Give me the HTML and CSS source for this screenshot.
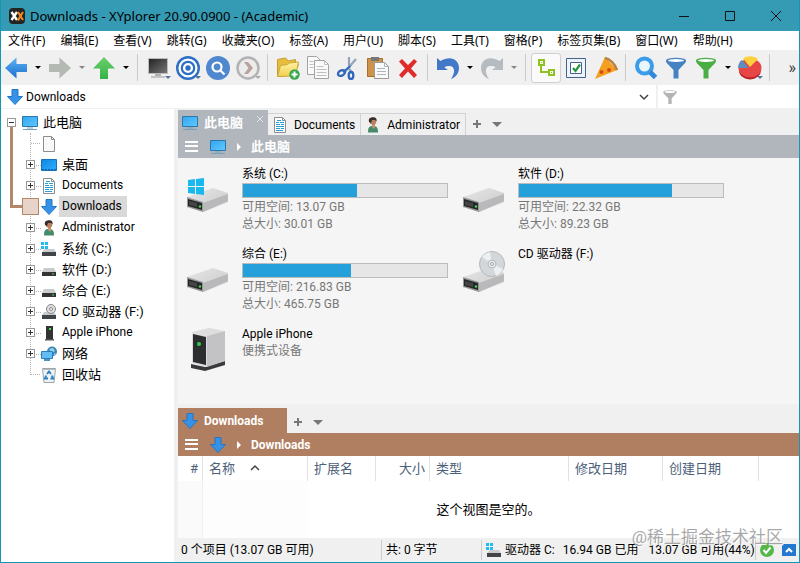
FILE: index.html
```html
<!DOCTYPE html>
<html lang="zh-CN">
<head>
<meta charset="utf-8">
<title>Downloads - XYplorer 20.90.0900 - (Academic)</title>
<link rel="stylesheet" href="styles.css">
</head>
<body>
<svg class="defs" aria-hidden="true">
  <defs>
    <linearGradient id="gBlue" x1="0" y1="0" x2="0" y2="1"><stop offset="0" stop-color="#5db2f2"/><stop offset="1" stop-color="#1b6fd0"/></linearGradient>
    <linearGradient id="gScreen" x1="0" y1="0" x2="1" y2="1"><stop offset="0" stop-color="#35a4f0"/><stop offset="1" stop-color="#5fcaff"/></linearGradient>
    <linearGradient id="gDesk" x1="0" y1="0" x2="1" y2="1"><stop offset="0" stop-color="#0f86e0"/><stop offset="1" stop-color="#2fb0ff"/></linearGradient>
    <linearGradient id="gGreen" x1="0" y1="0" x2="0" y2="1"><stop offset="0" stop-color="#6bd06a"/><stop offset="1" stop-color="#36b14a"/></linearGradient>
    <linearGradient id="gDark" x1="0" y1="0" x2="1" y2="1"><stop offset="0" stop-color="#222"/><stop offset="1" stop-color="#777"/></linearGradient>
    <linearGradient id="gTop" x1="0" y1="0" x2="1" y2="1"><stop offset="0" stop-color="#e6e6e6"/><stop offset="1" stop-color="#c9c9cb"/></linearGradient>
    <linearGradient id="gFolder" x1="0" y1="0" x2="0" y2="1"><stop offset="0" stop-color="#fff3a6"/><stop offset="1" stop-color="#f2cf4e"/></linearGradient>
  </defs>
  <symbol id="down" viewBox="0 0 16 16"><path d="M5 .5h6v7h4.500L8 15.500.500 7.500H5z" fill="#3592e6" stroke="#2377c4"/></symbol>
  <symbol id="pc" viewBox="0 0 18 16"><path d="M1.500 1.500h15v10h-15z" fill="url(#gScreen)" stroke="#2b78ad"/><path d="M6 13h6M2 14.500h14" stroke="#7aa0b8"/></symbol>
  <symbol id="desk" viewBox="0 0 16 16"><path d="M.500 2.500h15v11H.500z" fill="url(#gDesk)" stroke="#1573bf"/><path d="M1 12.500h14" stroke="#0f61ad" stroke-dasharray="2 1"/></symbol>
  <symbol id="page" viewBox="0 0 16 16"><path d="M2.500.500h8l3 3v12h-11z" fill="#f8f8f8" stroke="#8d8d8d"/><path d="M10.500.500v3h3" fill="none" stroke="#8d8d8d"/></symbol>
  <symbol id="docs" viewBox="0 0 16 16"><path d="M2.500.500h8l3 3v12h-11z" fill="#fff" stroke="#8d8d8d"/><path d="M10.500.500v3h3" fill="none" stroke="#8d8d8d"/><path d="M4 5.500h3m1 0h4M4 7.500h4m1 0h3M4 9.500h8M4 11.500h4m1 0h3M4 13.500h7M5 3.500h4" stroke="#259fd5"/></symbol>
  <symbol id="user" viewBox="0 0 16 16"><path d="M3 15.500c0-5 1-6.500 5-6.500 4 0 5 2 5 6.500z" fill="#468a6c"/><path d="M7 7h3v3l-1 2-2-2z" fill="#c8916d"/><circle cx="8" cy="4.500" r="3.300" fill="#b98160"/><path d="M4 5C3 1 6 .3 8 .300c3 0 4 2 3.500 4L10 3H7L6 6z" fill="#382d28"/></symbol>
  <symbol id="drive" viewBox="0 0 16 16"><path d="M3 6h10l2 4H1z" fill="#c9cbcc"/><path d="M1 10h14v4H1z" fill="#333"/><path d="M11 11.500h2v1h-2z" fill="#4fe070"/></symbol>
  <symbol id="wdrive" viewBox="0 0 16 16"><path d="M4 8h9l2 3H1z" fill="#c9cbcc"/><path d="M1 11h14v4H1z" fill="#414548"/><path d="M0 1h3v3H0zM4 1h3v3H4zM0 5h3v3H0zM4 5h3v3H4z" fill="#22bdf0"/></symbol>
  <symbol id="cd" viewBox="0 0 16 16"><path d="M3 8h10l2 3H1z" fill="#c9cbcc"/><path d="M1 11h14v4H1z" fill="#414548"/><circle cx="10" cy="5" r="4.500" fill="#dedede" stroke="#888"/><circle cx="10" cy="5" r="1.500" fill="#fff" stroke="#888"/></symbol>
  <symbol id="phone" viewBox="0 0 16 16"><path d="M5 1h7v13H5z" fill="#333"/><path d="M4 14h9v1.500H4z" fill="#555"/><path d="M8 3h2v2H8z" fill="#4ade59"/></symbol>
  <symbol id="net" viewBox="0 0 16 16"><circle cx="11" cy="5.500" r="5" fill="#3c86b8"/><path d="M8 3l4-1 2 3-3 2zM13 7l2 1-2 2z" fill="#9acfe4"/><path d="M.500 5.500h11v7H.500z" fill="#62bdf5" stroke="#2680c2"/><path d="M3 14h6" stroke="#4c93c0" stroke-width="2"/></symbol>
  <symbol id="bin" viewBox="0 0 16 16"><path d="M1.500 1.500h13l-1.500 14H3z" fill="#f0f3f5" stroke="#9aa4aa"/><path d="M1 2.500h14" stroke="#b7bec3"/><path d="M6 7l2-2.500L10 7M11 8.500l1 3H9.500M7 11.500H4l1.200-3" fill="none" stroke="#2c7fc0" stroke-width="2"/></symbol>
  <symbol id="funnel" viewBox="0 0 24 24"><path d="M2 4.500C2 7 4 8 9.500 14v8.500h5V14C20 8 22 7 22 4.500z"/><ellipse cx="12" cy="4.500" rx="10" ry="2.700"/><ellipse cx="12" cy="4.500" rx="8" ry="1.500" fill="#fff"/></symbol>
  <symbol id="bigdrive" viewBox="0 0 46 46"><path d="M2 25 28 16l15 5v9L18 40 2 34z" fill="url(#gTop)"/><path d="M18 31 43 22v7L18 40z" fill="#b9b9bc"/><path d="M2 25l16 5v10L2 35z" fill="#96989a"/><path d="M3 27l14 4v7L3 34z" fill="#252728"/><path d="M4 29l8 2v4l-8-2z" fill="#434547"/><circle cx="15" cy="34.500" r="1.300" fill="#43d054"/></symbol>
</svg>

<div class="window">
  <header class="titlebar">
    <svg class="logo" viewBox="0 0 16 16"><rect width="16" height="16" rx="4" fill="#242424"/><path d="M2.500 4 8 12M8 4l-5.500 8" stroke="#fff" stroke-width="2.400"/><path d="M9 4l2.500 4L14 4M11.500 8 9 12.500M11.500 8l2.500 4" fill="none" stroke="#f58b1f" stroke-width="2"/></svg>
    <h1>Downloads - XYplorer 20.90.0900 - (Academic)</h1>
    <button class="wbtn" aria-label="最小化"><svg viewBox="0 0 12 12"><path d="M1 6.500h10"/></svg></button>
    <button class="wbtn" aria-label="最大化"><svg viewBox="0 0 12 12"><path d="M1.500 1.500h9v9h-9z"/></svg></button>
    <button class="wbtn" aria-label="关闭"><svg viewBox="0 0 12 12"><path d="M1 1l10 10M11 1 1 11"/></svg></button>
  </header>

  <nav class="menubar">
    <button>文件(F)</button><button>编辑(E)</button><button>查看(V)</button><button>跳转(G)</button><button>收藏夹(O)</button><button>标签(A)</button><button>用户(U)</button><button>脚本(S)</button><button>工具(T)</button><button>窗格(P)</button><button>标签页集(B)</button><button>窗口(W)</button><button>帮助(H)</button>
  </nav>

  <div class="toolbar" role="toolbar">
    <button class="tool" aria-label="后退"><svg viewBox="0 0 24 24"><path d="M1 12 12.500 1.500V8H23v8H12.500v6.500z" fill="url(#gBlue)"/></svg></button>
    <button class="drop" aria-label="后退列表"></button>
    <button class="tool" aria-label="前进"><svg viewBox="0 0 24 24"><path d="M23 12 11.500 1.500V8H1v8h10.500v6.500z" fill="#b4b9b4"/></svg></button>
    <button class="drop dim" aria-label="前进列表"></button>
    <button class="tool" aria-label="向上"><svg viewBox="0 0 24 24"><path d="M12 1 23 12.500h-7V23H8V12.500H1z" fill="url(#gGreen)"/></svg></button>
    <button class="drop" aria-label="向上列表"></button>
    <span class="sep"></span>
    <button class="tool mark" aria-label="此电脑"><svg viewBox="0 0 24 24"><path d="M2.500 2.500h19v15h-19z" fill="url(#gDark)" stroke="#bcbcbc"/><path d="M9 18h6v2H9z" fill="#b0b0b0"/><path d="M5 21h14" stroke="#c4c4c4" stroke-width="2"/></svg></button>
    <button class="tool mark" aria-label="定位"><svg viewBox="0 0 24 24"><circle cx="12" cy="12" r="11" fill="#fff"/><g fill="none" stroke="#2d6fc4"><circle cx="12" cy="12" r="10.800" stroke-width="2.400"/><circle cx="12" cy="12" r="6.200" stroke-width="2.200"/></g><circle cx="12" cy="12" r="2.700" fill="#2d6fc4"/></svg></button>
    <button class="tool" aria-label="快速搜索"><svg viewBox="0 0 24 24"><circle cx="12" cy="12" r="12" fill="#4f88cf"/><g fill="none" stroke="#fff" stroke-width="2.200"><circle cx="11" cy="11" r="4.500"/><path d="M14.500 14.500 18.500 18.500"/></g></svg></button>
    <button class="tool mark pale" aria-label="转到"><svg viewBox="0 0 24 24"><circle cx="12" cy="12" r="10.500" fill="#ececec" stroke="#b3b3b3" stroke-width="2.500"/><path d="M8 6h4l5 6-5 6H8l4.500-6z" fill="#b9a39c"/></svg></button>
    <span class="sep"></span>
    <button class="tool" aria-label="新建文件夹"><svg viewBox="0 0 24 24"><path d="M1.500 20.500v-17l8-1.500 3 3 7-1.500v4l3 1-4 10z" fill="#e7bd3e" stroke="#c59d2d"/><path d="M1.500 20.500 4.500 9.500l7-1 2-1.500 9-1-3 14z" fill="url(#gFolder)" stroke="#cfa638"/><circle cx="18.500" cy="18.500" r="5.200" fill="#38a84a"/><path d="M15.500 18.500h6M18.500 15.500v6" stroke="#fff" stroke-width="2"/></svg></button>
    <button class="tool" aria-label="复制"><svg viewBox="0 0 24 24"><g fill="#fafafa" stroke="#a3a3a3"><path d="M1.500.500h9l4 4v14h-13z"/><path d="M8.500 4.500h10l4 4v14h-14z"/></g><path d="M18.500 4.500v4h4M3.500 5.500h4m-4 3h4m-4 3h4m3-1h7m-7 3h10m-10 3h10m-10 3h10" fill="none" stroke="#b9c1c6"/></svg></button>
    <button class="tool" aria-label="剪切"><svg viewBox="0 0 24 24"><path d="M13 1v12l4 4M20 3 8 17" fill="none" stroke="#93a5b8" stroke-width="2.200"/><path d="M14.500 10 7 16" stroke="#356fbe" stroke-width="2"/><g fill="none" stroke="#3067bd" stroke-width="2.300"><ellipse cx="5.500" cy="17" rx="3.800" ry="2.500" transform="rotate(-30 5.500 17)"/><ellipse cx="15" cy="19.500" rx="2.300" ry="3.500"/></g></svg></button>
    <button class="tool" aria-label="粘贴"><svg viewBox="0 0 24 24"><path d="M1.500 2.500h15v18h-15z" fill="#cc9349" stroke="#a8712b"/><path d="M5 1h8v4H5z" fill="#777"/><path d="M8.500 6.500h10l4 4v12h-14z" fill="#fafafa" stroke="#9b9b9b"/><path d="M18.500 6.500v4h4M11 12.500h8m-8 3h9m-9 3h9" fill="none" stroke="#aab5be"/></svg></button>
    <button class="tool" aria-label="删除"><svg viewBox="0 0 24 24"><path d="M3 5.500 6 3l6 6 6-6 3 2.500L15 12.500l6 6.500-3 3-6-6.500L6 22l-3-3 6-6.500z" fill="#e02b2b"/></svg></button>
    <span class="sep"></span>
    <button class="tool" aria-label="撤销"><svg viewBox="0 0 24 24"><path d="M1 2l3.500 3C14-1 23 3 23 12c0 5-3 9-8 11 5-7 4-14-3-13-2 0-3 1-3.500 1.500L12 14H1z" fill="#4178c8"/></svg></button>
    <button class="drop" aria-label="撤销列表"></button>
    <button class="tool" aria-label="重做"><svg viewBox="0 0 24 24"><path d="M23 2l-3.500 3C10-1 1 3 1 12c0 5 3 9 8 11-5-7-4-14 3-13 2 0 3 1 3.500 1.500L12 14h11z" fill="#b6bbc0"/></svg></button>
    <button class="drop dim" aria-label="重做列表"></button>
    <span class="sep"></span>
    <button class="tool pressed" aria-label="文件夹树" aria-pressed="true"><svg viewBox="0 0 24 24"><g fill="none" stroke="#8fc21f" stroke-width="2"><path d="M5 4h5v5H5zM15 14h5v5h-5zM7 10v6h7"/></g><path d="M7 6.500h1M17 16.500h1" stroke="#8fc21f"/></svg></button>
    <button class="tool" aria-label="复选框"><svg viewBox="0 0 24 24"><path d="M2.500 2.500h19v19h-19z" fill="#eef3fb" stroke="#44618f"/><path d="M6.500 6.500h11v11h-11z" fill="#fff" stroke="#44618f"/><path d="M9 12l2.500 3L16 8.500" fill="none" stroke="#28963c" stroke-width="2.200"/></svg></button>
    <button class="tool" aria-label="比萨"><svg viewBox="0 0 24 24"><path d="M11 1 1 23 23 14z" fill="#f59f20"/><path d="M11 2c5 1 10 6 12 12" fill="none" stroke="#b88343" stroke-width="2.500"/><circle cx="7.500" cy="16" r="2" fill="#d44c18"/><circle cx="15" cy="14" r="2" fill="#d44c18"/></svg></button>
    <span class="sep"></span>
    <button class="tool" aria-label="搜索"><svg viewBox="0 0 24 24"><circle cx="10.500" cy="10" r="7.500" fill="#eaf6fe" stroke="#3b9ce9" stroke-width="4"/><path d="M16 16l5.500 5.500" stroke="#3188d8" stroke-width="5"/></svg></button>
    <button class="tool" aria-label="过滤"><svg class="f-blue"><use href="#funnel"/></svg></button>
    <button class="tool" aria-label="显示过滤"><svg class="f-green"><use href="#funnel"/></svg></button>
    <button class="drop" aria-label="过滤列表"></button>
    <button class="tool mark" aria-label="统计"><svg viewBox="0 0 24 24"><ellipse cx="12" cy="14.500" rx="11" ry="9" fill="#b92024"/><ellipse cx="12" cy="12" rx="11.500" ry="9.500" fill="#e84545"/><path d="M12 11 5 2.500C9-.500 16-.500 20 3z" fill="#fbd23c"/><path d="M11 12H0c0-4 2-7 4-8z" fill="#5c8fc0"/></svg></button>
    <span class="sep"></span>
    <button class="more" aria-label="更多">»</button>
  </div>

  <div class="addressbar">
    <label class="address"><svg class="i16"><use href="#down"/></svg><input type="text" value="Downloads" aria-label="地址"></label>
    <button class="chev" aria-label="历史"><svg viewBox="0 0 10 10"><path d="M1 3l4 4 4-4"/></svg></button>
    <label class="filter"><svg class="f-gray"><use href="#funnel"/></svg><input type="text" aria-label="过滤"></label>
  </div>

  <div class="body">
    <aside class="tree">
      <a href="#" class="root"><span class="exp minus"></span><svg class="ic"><use href="#pc"/></svg><span class="lb zh">此电脑</span></a>
      <ul>
        <li><a href="#"><span class="leaf"></span><svg class="ic"><use href="#page"/></svg></a></li>
        <li><a href="#"><span class="exp"></span><svg class="ic"><use href="#desk"/></svg><span class="lb zh">桌面</span></a></li>
        <li><a href="#"><span class="exp"></span><svg class="ic"><use href="#docs"/></svg><span class="lb">Documents</span></a></li>
        <li class="current"><a href="#"><span class="box"></span><svg class="ic"><use href="#down"/></svg><span class="lb">Downloads</span></a></li>
        <li><a href="#"><span class="exp"></span><svg class="ic"><use href="#user"/></svg><span class="lb">Administrator</span></a></li>
        <li><a href="#"><span class="exp"></span><svg class="ic"><use href="#wdrive"/></svg><span class="lb zh">系统 (C:)</span></a></li>
        <li><a href="#"><span class="exp"></span><svg class="ic"><use href="#drive"/></svg><span class="lb zh">软件 (D:)</span></a></li>
        <li><a href="#"><span class="exp"></span><svg class="ic"><use href="#drive"/></svg><span class="lb zh">综合 (E:)</span></a></li>
        <li><a href="#"><span class="exp"></span><svg class="ic"><use href="#cd"/></svg><span class="lb zh">CD 驱动器 (F:)</span></a></li>
        <li><a href="#"><span class="exp"></span><svg class="ic"><use href="#phone"/></svg><span class="lb">Apple iPhone</span></a></li>
        <li><a href="#"><span class="exp"></span><svg class="ic"><use href="#net"/></svg><span class="lb zh">网络</span></a></li>
        <li><a href="#"><span class="leaf"></span><svg class="ic"><use href="#bin"/></svg><span class="lb zh">回收站</span></a></li>
      </ul>
    </aside>

    <main class="panes">
      <section class="pane upper">
        <div class="tabs">
          <button class="tab active"><svg class="ic"><use href="#pc"/></svg><span class="zh">此电脑</span><svg class="close" viewBox="0 0 8 8"><path d="M1 1l6 6M7 1 1 7"/></svg></button>
          <button class="tab"><svg class="ic"><use href="#docs"/></svg><span>Documents</span></button>
          <button class="tab"><svg class="ic"><use href="#user"/></svg><span>Administrator</span></button>
          <button class="plus" aria-label="新建标签"><svg viewBox="0 0 8 8"><path d="M0 4h8M4 0v8"/></svg></button>
          <button class="tablist" aria-label="标签列表"></button>
        </div>
        <div class="crumbs">
          <button class="burger" aria-label="菜单"></button><svg class="ic"><use href="#pc"/></svg><span class="tri"></span><a href="#" class="zh">此电脑</a>
        </div>
        <div class="drives">
          <article class="item">
            <svg class="big" viewBox="0 -4 46 50"><use href="#bigdrive" width="46" height="46"/><path d="M3 8l7-1v7H3zM11 7l8-1v8h-8zM3 15h7v7l-7-1zM11 15h8v8l-8-1z" fill="#19b8ef"/></svg>
            <div class="info"><h2>系统 (C:)</h2><div class="bar"><div class="fill" style="width:56%"></div></div><p>可用空间: 13.07 GB</p><p>总大小: 30.01 GB</p></div>
          </article>
          <article class="item">
            <svg class="big" viewBox="0 -4 46 50"><use href="#bigdrive" width="46" height="46"/></svg>
            <div class="info"><h2>软件 (D:)</h2><div class="bar"><div class="fill" style="width:75%"></div></div><p>可用空间: 22.32 GB</p><p>总大小: 89.23 GB</p></div>
          </article>
          <article class="item">
            <svg class="big" viewBox="0 -4 46 50"><use href="#bigdrive" width="46" height="46"/></svg>
            <div class="info"><h2>综合 (E:)</h2><div class="bar"><div class="fill" style="width:53%"></div></div><p>可用空间: 216.83 GB</p><p>总大小: 465.75 GB</p></div>
          </article>
          <article class="item">
            <svg class="big" viewBox="0 -4 46 50"><use href="#bigdrive" width="46" height="46"/><circle cx="31" cy="12" r="12.500" fill="#d3d7d9" stroke="#b5babd"/><path d="M31 12 21 5a12 12 0 0 1 8-5zM31 12l11 5a12 12 0 0 1-7 7z" fill="#edf0f1"/><circle cx="31" cy="12" r="4" fill="#e8ebec" stroke="#b5babd"/><circle cx="31" cy="12" r="1.500" fill="#fff" stroke="#9da2a5"/></svg>
            <div class="info"><h2>CD 驱动器 (F:)</h2></div>
          </article>
          <article class="item">
            <svg class="big" viewBox="0 0 46 50"><path d="M6 36l14 3 20-6v4L20 43 6 40z" fill="#3a3a3c"/><path d="M7 4 24 0l16 3-18 5z" fill="#dededf"/><path d="M22 8 40 3v30l-18 6z" fill="#c3c3c6"/><path d="M7 4l15 4v31L7 35z" fill="#dcdcdc"/><path d="M8 6l13 3v28L8 34z" fill="#2c2e2f"/><circle cx="14" cy="16" r="2" fill="#2fd043"/></svg>
            <div class="info"><h2>Apple iPhone</h2><p>便携式设备</p></div>
          </article>
        </div>
      </section>

      <section class="pane lower">
        <div class="tabs">
          <button class="tab active"><svg class="ic"><use href="#down"/></svg><span>Downloads</span></button>
          <button class="plus" aria-label="新建标签"><svg viewBox="0 0 8 8"><path d="M0 4h8M4 0v8"/></svg></button>
          <button class="tablist" aria-label="标签列表"></button>
        </div>
        <div class="crumbs">
          <button class="burger" aria-label="菜单"></button><svg class="ic"><use href="#down"/></svg><span class="tri"></span><a href="#">Downloads</a>
        </div>
        <table class="list">
          <colgroup><col class="c-num"><col class="c-name"><col class="c-ext"><col class="c-size"><col class="c-type"><col class="c-mod"><col class="c-new"><col></colgroup>
          <thead><tr><th class="right">#</th><th>名称<svg class="sort" viewBox="0 0 10 10"><path d="M1 7l4-4 4 4"/></svg></th><th>扩展名</th><th class="right">大小</th><th>类型</th><th>修改日期</th><th>创建日期</th><th></th></tr></thead>
          <tbody><tr><td colspan="8">这个视图是空的。</td></tr></tbody>
        </table>
      </section>

      <footer class="status">
        <span class="count">0 个项目 (13.07 GB 可用)</span>
        <span class="bytes">共: 0 字节</span>
        <span class="disk"><svg class="i16"><use href="#wdrive"/></svg><span>驱动器 C:</span><span>16.94 GB 已用</span><span>13.07 GB 可用(44%)</span></span>
        <span class="ends"><svg class="i14" viewBox="0 0 14 14"><circle cx="7" cy="7" r="7" fill="#55b748"/><path d="M3.500 7l2.500 3 4.500-5.500" fill="none" stroke="#fff" stroke-width="2"/></svg><button class="up" aria-label="展开信息面板"><svg viewBox="0 0 10 10"><path d="M2 7l3-3 3 3"/></svg></button></span>
      </footer>
    </main>
  </div>
  <div class="watermark">@稀土掘金技术社区</div>
</div>
</body>
</html>
```
FILE: styles.css
```css
* { box-sizing: border-box; }

body {
  margin: 0;
  font: 12px/16px Roboto, "Noto Sans CJK SC", sans-serif;
  color: #000;
}

h1, h2, p, ul { margin: 0; padding: 0; font-size: inherit; font-weight: normal; }
ul { list-style: none; }
a { color: inherit; text-decoration: none; }
button, input { font: inherit; color: inherit; background: none; border: 0; padding: 0; margin: 0; outline: 0; }
svg { display: block; flex: none; }

.defs { position: absolute; width: 0; height: 0; }
.i16 { width: 16px; height: 16px; }
.i14 { width: 14px; height: 14px; }
.zh { font-size: 13px; }

.window {
  position: relative;
  display: flex;
  flex-direction: column;
  min-height: 100vh;
  background: #f0f0f0;
  border: 1px solid #1298b5;
  border-top: 0;
}

/* Title and menu */
.titlebar, .menubar { font-family: "Noto Sans", "Noto Sans CJK SC", sans-serif; }
.titlebar { display: flex; align-items: center; height: 31px; padding-left: 8px; background: #359ab3; }
.logo { width: 16px; height: 16px; margin-right: 5px; }
.titlebar h1 { flex: 1; font-size: 13px; white-space: nowrap; }
.wbtn { width: 46px; height: 31px; display: grid; place-items: center; }
.wbtn svg { width: 12px; height: 12px; fill: none; stroke: #111; }

.menubar { display: flex; gap: 15px; height: 19px; padding-left: 7px; background: #fff; white-space: nowrap; }

/* Toolbar */
.toolbar { display: flex; align-items: center; height: 35px; }
.tool { position: relative; width: 30px; height: 30px; display: grid; place-items: center; flex: none; }
.tool svg { width: 24px; height: 24px; }
.pressed { background: #fafafa; border: 1px solid #cfcfcf; border-radius: 3px; }
.drop { width: 14px; height: 30px; display: grid; place-items: center; flex: none; }
.drop::after { content: ""; border: 3px solid transparent; border-top-color: #000; border-bottom: 0; }
.dim::after { border-top-color: #888; }
.mark::after {
  content: "";
  position: absolute;
  right: 2px;
  bottom: 4px;
  border: 3px solid transparent;
  border-top-color: #56709c;
  border-bottom: 0;
}
.pale::after { border-top-color: #aaa; }
.sep { width: 1px; height: 27px; margin: 0 5px 0 4px; background: #cbcbcb; flex: none; }
.more { margin-left: auto; padding-right: 3px; font-size: 16px; color: #333; }
.f-blue { fill: #4682c2; }
.f-green { fill: #4bae44; }
.f-gray { fill: #b4b4b4; width: 16px; height: 16px; }

/* Address */
.addressbar { display: flex; height: 23px; background: #fff; }
.addressbar input { flex: 1; min-width: 0; }
.address { flex: 1; display: flex; align-items: center; gap: 3px; padding-left: 6px; }
.chev { width: 24px; display: grid; place-items: center; }
.chev svg, .sort { width: 10px; height: 10px; fill: none; stroke: #444; stroke-width: 1.500; }
.filter { width: 143px; display: flex; align-items: center; gap: 4px; padding-left: 4px; border-left: 2px solid #f0f0f0; }

/* Folder tree */
.body { flex: 1; display: grid; grid-template-columns: 173px 1fr; column-gap: 4px; }
.tree { background: #fff; padding: 3px 0 0 6px; white-space: nowrap; border-top: 1px solid #f0f0f0; }
.tree a { display: flex; align-items: center; height: 21px; }
.tree .ic { width: 16px; height: 16px; }
.root .exp { margin-right: 5px; }
.root .ic { width: 18px; }
.root .lb { padding-left: 4px; }
.tree .lb { line-height: 21px; }
.tree ul { position: relative; padding-left: 19px; }
.tree ul::before {
  content: "";
  position: absolute;
  left: 23px;
  top: 0;
  bottom: 10px;
  border-left: 1px dotted #b5b5b5;
}
.tree li { position: relative; }
.tree li .ic { margin-left: -1px; }
.tree li .lb { padding: 0 5px 0 3px; margin-left: 2px; }
.exp, .leaf, .box { position: relative; width: 9px; height: 9px; flex: none; }
.exp { border: 1px solid #999; background: linear-gradient(#333, #333) center / 5px 1px no-repeat, linear-gradient(#333, #333) center / 1px 5px no-repeat, #fff; }
.minus { background: linear-gradient(#333, #333) center / 5px 1px no-repeat, #fff; }
.tree li .exp, .tree li .leaf { margin-right: 7px; }
.tree li .exp::after, .tree li .leaf::after {
  content: "";
  position: absolute;
  left: 9px;
  top: 4px;
  width: 5px;
  border-top: 1px dotted #b5b5b5;
}
.tree li .leaf::after { left: 5px; width: 9px; }
.current .box { width: 17px; height: 17px; margin: 0 3px 0 -4px; border: 1px solid #b4866a; background: #e8d3c8; }
.current .lb { background: #d9d9d9; }
.current::before {
  content: "";
  position: absolute;
  left: -16px;
  bottom: 9px;
  width: 12px;
  height: 78px;
  border: solid #b4866a;
  border-width: 0 0 3px 3px;
}

/* Panes */
.panes { display: flex; flex-direction: column; min-width: 0; }
.pane { display: flex; flex-direction: column; }
.upper { --accent: #b0b6bc; flex: 1; padding-top: 2px; }
.lower { --accent: #b07e60; }
.tabs { display: flex; align-items: flex-end; height: 25px; }
.lower .tabs { height: 29px; }
.tab { display: flex; align-items: center; gap: 5px; height: 22px; padding: 0 5px 0 3px; border: 1px solid #d2d2d2; border-width: 1px 1px 0 0; }
.tab .ic, .crumbs .ic { width: 18px; height: 16px; }
.tab.active { height: 25px; padding-right: 4px; border: 0; background: var(--accent); color: #fff; font-weight: bold; }
.lower .tab.active { padding-right: 24px; }
.close { width: 8px; height: 8px; align-self: flex-start; margin: 5px 0 0 8px; fill: none; stroke: #e3e6e8; }
.plus { height: 22px; width: 21px; display: grid; place-items: center; }
.plus svg { width: 8px; height: 8px; stroke: #777; stroke-width: 2; }
.tablist { width: 20px; height: 22px; display: grid; place-items: center; }
.tablist::after { content: ""; border: 5px solid transparent; border-top-color: #777; border-bottom: 0; }
.crumbs { display: flex; align-items: center; height: 23px; padding-left: 7px; background: var(--accent); color: #fff; font-weight: bold; }
.burger { width: 13px; height: 11px; margin-right: 11px; background: linear-gradient(#fff 2px, transparent 2px 4px, #fff 4px 6px, transparent 6px 9px, #fff 9px); }
.tri { margin: 0 10px; border: 4px solid transparent; border-left-color: #fff; border-right: 0; }

.drives { flex: 1; display: grid; grid-template-columns: 276px 276px; row-gap: 12px; grid-auto-rows: minmax(68px, auto); align-content: start; padding: 7px 0 0 7px; background: #f5f5f5; }
.item { display: flex; gap: 11px; }
.big { width: 46px; height: 50px; margin-top: 3px; }
.info { width: 206px; }
.info h2 { line-height: 18px; }
.info p { color: #777; line-height: 17px; }
.bar { height: 15px; margin-bottom: 1px; border: 1px solid #bcbcbc; background: #e6e6e6; }
.fill { height: 100%; background: #26a0da; }

/* File list */
.list { width: 100%; table-layout: fixed; border-collapse: separate; border-spacing: 0; background: #fff; font-size: 13px; }
.c-num { width: 25px; }
.c-name { width: 105px; }
.c-ext { width: 68px; }
.c-size { width: 54px; }
.c-type { width: 139px; }
.c-mod { width: 94px; }
.c-new { width: 96px; }
.list th { height: 25px; padding: 0 6px; text-align: left; font-weight: normal; color: #4c607a; border-right: 1px solid #e2e2e2; white-space: nowrap; }
.list th.right { text-align: right; padding: 0 4px; }
.list th:last-child { border: 0; }
.sort { display: inline-block; margin-left: 15px; }
.list td { height: 57px; padding: 0; text-align: center; background: linear-gradient(90deg, #fafafa 24px, #f0f0f0 24px 25px, #fdfdfd 25px 130px, #fff 130px); }

/* Status */
.status { display: flex; align-items: center; height: 24px; white-space: nowrap; }
.status > span { display: flex; align-items: center; height: 20px; }
.status > span + span { border-left: 1px solid #ccc; padding-left: 4px; }
.count { width: 203px; padding-left: 3px; }
.bytes { width: 100px; }
.disk { flex: 1; gap: 8px; }
.disk svg { margin-right: -5px; }
.disk span:last-child { margin-left: 2px; }
.ends { gap: 8px; padding-right: 3px; }
.up { width: 14px; height: 12px; display: grid; place-items: center; background: #2377cf; }
.up svg { width: 10px; height: 10px; fill: none; stroke: #fff; stroke-width: 2; }

.watermark {
  position: absolute;
  right: 16px;
  bottom: 13px;
  font-size: 17px;
  line-height: 24px;
  color: rgba(110, 110, 110, 0.600);
  text-shadow: 1px 1px 0 #fff;
  pointer-events: none;
}
```
